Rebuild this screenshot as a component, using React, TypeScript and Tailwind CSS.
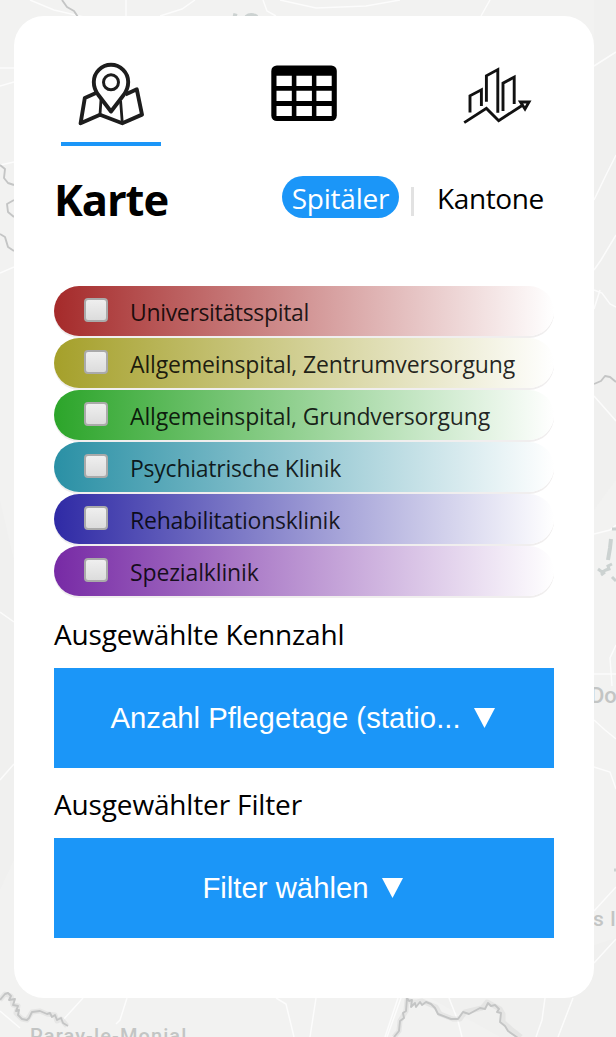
import React from "react";

const categories = [
  { label: "Universitätsspital", tone: "from-[#a52a2a]", tracking: "tracking-[-0.34px]" },
  { label: "Allgemeinspital, Zentrumversorgung", tone: "from-[#a5a02a]", tracking: "tracking-[-0.13px]" },
  { label: "Allgemeinspital, Grundversorgung", tone: "from-[#2ca52a]", tracking: "tracking-[-0.15px]" },
  { label: "Psychiatrische Klinik", tone: "from-[#2a90a5]", tracking: "tracking-[-0.24px]" },
  { label: "Rehabilitationsklinik", tone: "from-[#2f2aa5]", tracking: "tracking-[-0.24px]" },
  { label: "Spezialklinik", tone: "from-[#772aa5]", tracking: "tracking-[-0.14px]" },
];

function MapBackground() {
  return (
    <svg className="absolute inset-0" width="616" height="1037" viewBox="0 0 616 1037" fill="none" aria-hidden="true">
      <rect width="616" height="1037" fill="#f2f2f1" />
      <path d="M594 0h22v480l-22 30zM0 500l14 60v300l-14 30zM430 998l186-60v99H500z" fill="#f0f0ef" />
      <g stroke="#fff" strokeOpacity="0.75" strokeWidth="1.5">
        <path d="M30 0l24 10 30 7M126 0v16M195 0l-13 9-22 7M263 0l4 11 9 5M280 0l36 8 50-2 34-6M490 0l-9 16M0 68h14M0 86l14-4M616 52l-22 14M0 165l14-3M0 273l14-6M600 290l-6 19M594 290l8 3 8 11 6 3M594 396l22 25M594 534l16-4 6-5M616 645l-6 13 2 28M594 674h22M594 720l11 10 11 9M594 767l16 5 6 17M594 911l22-24M594 963l22-24M0 612l14 10M0 780l14-16" />
        <path d="M83 998l-20 22M127 998l-7 22-4 4M276 998l10 6 8 33M316 998l-6 39M401 998l-14 39M398 998l-13 39M449 998l9 23 4 16M545 998l-3 22-6 17M573 998l-15 39M0 1011l20 17M594 200l12-25 10-20M616 235l-15 25-7 10" />
      </g>
      <g stroke="#dadada" strokeWidth="5" strokeLinejoin="round" strokeOpacity="0.5">
        <path d="M0 1000l5-6 6 2 2 9 5 1-2 7 6 6 5 1 5-8 8-1 7 3 8 1 2 6 4-2 6 7M394 1037l5-6 1-10 6-10 1-11 5 2 5 0 5-1 14 6 4 7 13 5 7 0 5-7 17-4 5-6 13 7 3 5 0 8 9 8 9 7" />
      </g>
      <g stroke="#c4c5c5" strokeWidth="1.9" strokeLinejoin="round">
        <path d="M62 0l5 7 7 4 4 6M0 165l5 4-1 9 4 5 6 2M14 200l-7 4 1 8 6 5M0 234l5 3 3 10 6 4M594 384l7-3 4-5 5 1 6 5" />
        <path d="M0 1000l5-6 3-1 3 3-2 4 6-1-2 6 5 1-2 5 3-1-1 5 4 4 5 1 2-2 3-6 8-1 7 3 3-1 2 4 3-2 2 5 4-2 2 5 5 3M394 1037l5-6 1-10 4-3-1-5 3-2 1-13 2 3 3-1-1 7 4-4 1 4 4-5 2 3 4-3 5 2 4 4 3 6 13 5 7 0 5-7 6 2 11-6 5 1 3-6 3 3 4-1 4 4-2 3 4 1-1 9 5 4 3 5 10 7" />
      </g>
      <g stroke="#ccd2d1" strokeWidth="4">
        <path d="M233 15l4 1M246 17q5-4 11 0M611 539l-1 9-2 12" />
        <path d="M598 569l4 3 4-2 3-1-1-3 4-2M601 575l4-3M612 529h4M612 577l4 4M614 870h2" strokeWidth="3" />
      </g>
    </svg>
  );
}

function MapIcon() {
  return (
    <svg width="66" height="66" viewBox="78 61 66 66" fill="none" stroke="#1d1d1d" strokeWidth="3.900" strokeLinejoin="round">
      <path d="M96.500 92.800L84.800 98 80.600 123.300 100 114.800l22.300 8.500 19.700-8.700L136.800 89.300 125.500 94.500" />
      <path d="M101 99.500l-1 15M120.600 101l1.700 22" strokeWidth="2.800" />
      <path d="M111 111.500L98 94.500C94.500 89.500 93.800 86 93.800 82a17.200 17.200 0 0 1 34.400 0c0 4-.7 7.500-4.200 12.500z" />
      <circle cx="111" cy="82.300" r="7.500" strokeWidth="3" />
    </svg>
  );
}

function TableIcon() {
  return (
    <svg width="68" height="58" viewBox="270 65 68 58">
      <rect x="271.300" y="65.500" width="65.500" height="55.500" rx="5.500" fill="#000" />
      <g fill="#fff">
        <path d="M276.500 75.700h15.300v10.300h-15.300zM296.400 75.700h15.500v10.300h-15.500zM316.400 75.700h15.300v10.300h-15.300z" />
        <path d="M276.500 90.800h15.300v10.200h-15.300zM296.400 90.800h15.500v10.200h-15.500zM316.400 90.800h15.300v10.200h-15.300z" />
        <path d="M276.500 106h15.300v10h-15.300zM296.400 106h15.500v10h-15.500zM316.400 106h15.300v10h-15.300z" />
      </g>
    </svg>
  );
}

function ChartIcon() {
  return (
    <svg width="72" height="62" viewBox="461 64 72 62" fill="none" stroke="#111" strokeWidth="2.900">
      <path d="M470 112.500V95.800l11.400-6V106M486.400 101.700V75.800l11.400-6.200v43.200M503 111V83.200l11.200-6.100v27" />
      <path d="M464.200 122.600l22.200-14.200 12.300 12.300 23-15" />
      <path d="M520.500 102h8.500l-4 7z" />
    </svg>
  );
}

function Selector({ children }: { children: React.ReactNode }) {
  return (
    <button className="flex h-[100px] w-[500px] items-center justify-center whitespace-nowrap bg-[#1b96f8] pr-[3px] font-['Liberation_Sans',sans-serif] text-[29.3px] leading-8 text-white">
      {children}
    </button>
  );
}

function Caret() {
  return (
    <svg className="ml-[13px] shrink-0" width="21" height="22" viewBox="0 0 21 22" fill="#fff">
      <path d="M0 1h21L10.500 21z" />
    </svg>
  );
}

export default function App() {
  return (
    <div className="relative h-[1037px] w-[616px] overflow-hidden bg-[#f2f2f1] font-['Open_Sans','Noto_Sans',sans-serif] text-black">
      <MapBackground />
      <div className="absolute inset-0 text-[#c3c5c4]">
        <span className="absolute left-[30px] top-[1024px] whitespace-nowrap font-['Roboto',sans-serif] text-[20px] font-medium leading-6 tracking-[1.1px]">Paray-le-Monial</span>
        <span className="absolute left-[590px] top-[684px] font-['Roboto',sans-serif] text-[22px] font-medium leading-6">Do</span>
        <span className="absolute left-[593px] top-[907px] whitespace-nowrap font-['Roboto',sans-serif] text-[21px] font-medium leading-6 tracking-[0.6px]">s l</span>
      </div>
      <main className="relative ml-[14px] mt-[16px] h-[982px] w-[580px] rounded-[30px] bg-white px-10">
        <nav className="flex h-[130px] justify-between px-[7px]">
          <button className="flex w-[100px] flex-col items-center border-b-4 border-[#1b96f8] pt-[45px]"><MapIcon /></button>
          <button className="flex w-[100px] flex-col items-center pt-[49px]"><TableIcon /></button>
          <button className="flex w-[100px] flex-col items-center pt-[48px]"><ChartIcon /></button>
        </nav>

        <header className="flex h-[140px] pt-[30px]">
          <h1 className="h-[48px] w-[228px] text-[43.5px] font-bold leading-[48px] tracking-[-1.1px]">Karte</h1>
          <button className="h-[42px] w-[117px] rounded-[21px] bg-[#1b96f8] text-[28px] leading-[45px] tracking-[-0.2px] text-white">Spitäler</button>
          <div className="ml-[12px] mt-[11px] h-[29px] w-[3px] bg-[#e2e2e2]" />
          <button className="ml-[23px] h-[42px] whitespace-nowrap text-[28px] leading-[45px] tracking-[-0.4px]">Kantone</button>
        </header>

        <ul className="flex flex-col gap-[2px]">
          {categories.map((item) => (
            <li key={item.label} className={`flex h-[50px] items-center rounded-[25px] bg-linear-to-r/srgb ${item.tone} to-white pl-[30px] shadow-[0_2px_0_#f0eeee]`}>
              <span className="mb-[2px] block h-6 w-6 rounded-[4px] border-2 border-[#aaa] bg-linear-to-b from-[#efefef] to-[#dcdcdc]" />
              <span className={`ml-[22px] mt-px whitespace-nowrap text-[23px] leading-8 text-black/85 ${item.tracking}`}>{item.label}</span>
            </li>
          ))}
        </ul>

        <section>
          <h2 className="h-[72px] whitespace-nowrap pt-[19px] text-[28px] leading-[38px] tracking-[-0.17px]">Ausgewählte Kennzahl</h2>
          <Selector>Anzahl Pflegetage (statio...<Caret /></Selector>
          <h2 className="h-[70px] whitespace-nowrap pt-[17px] text-[28px] leading-[38px] tracking-[-0.15px]">Ausgewählter Filter</h2>
          <Selector>Filter wählen<Caret /></Selector>
        </section>
      </main>
    </div>
  );
}
